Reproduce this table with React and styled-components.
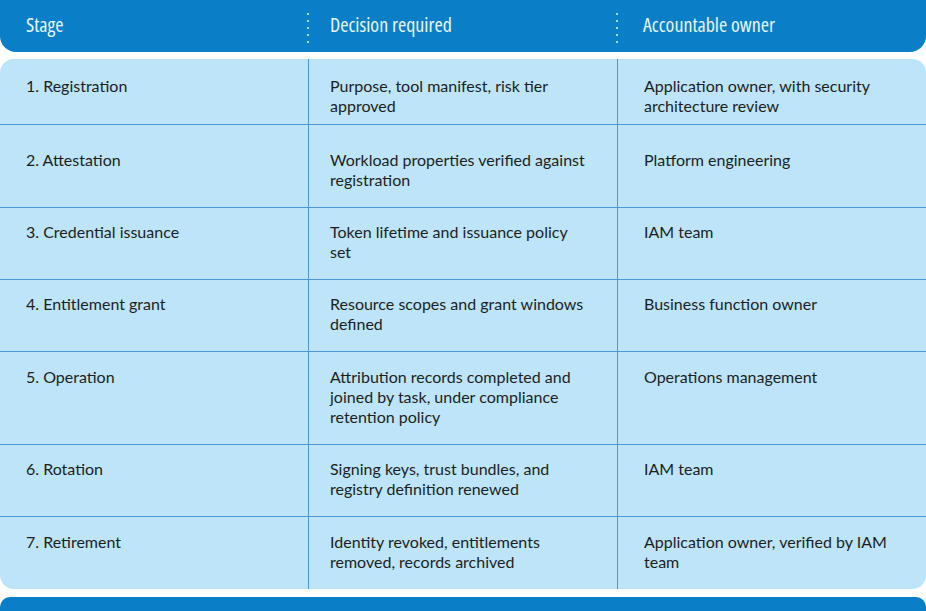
import React from 'react';
import styled, { createGlobalStyle } from 'styled-components';

const GlobalStyle = createGlobalStyle`
  html, body {
    margin: 0;
    padding: 0;
    background: #ffffff;
    overflow: hidden;
  }
`;

const Page = styled.div`
  width: 926px;
  height: 611px;
  display: flex;
  flex-direction: column;
  gap: 7px;
  font-family: Lato, "Noto Sans", sans-serif;
  overflow: hidden;
`;

const HeaderBar = styled.div`
  height: 52px;
  flex-shrink: 0;
  display: grid;
  grid-template-columns: 308px 309px 1fr;
  background: #0a7fc8;
  border-radius: 0 0 16px 16px;
  color: #e8f5fd;
`;

const HeaderCell = styled.div`
  position: relative;
  display: flex;
  align-items: center;
  padding-left: ${p => p.$pad}px;
  padding-bottom: 3px;
  font-family: "Open Sans", Lato, sans-serif;
  font-stretch: 75%;
  font-size: 20px;

  ${p => p.$divider && `
    &::before {
      content: '';
      position: absolute;
      left: -1px;
      top: 13px;
      width: 2px;
      height: 30px;
      background: repeating-linear-gradient(
        to bottom,
        rgba(215, 238, 252, 0.8) 0 2px,
        transparent 2px 7px
      );
    }
  `}
`;

const Body = styled.div`
  flex-shrink: 0;
  background: #bde4f8;
  border-radius: 14px;
  overflow: hidden;
`;

const Row = styled.div`
  display: grid;
  grid-template-columns: 308px 309px 1fr;
  height: ${p => p.$height}px;
  border-top: ${p => (p.$first ? 'none' : '1.5px solid #4a98d6')};
  box-sizing: border-box;
`;

const Cell = styled.div`
  padding: ${p => p.$top}px 30px 0 ${p => p.$pad}px;
  border-left: ${p => (p.$divider ? '1.5px solid #4a98d6' : 'none')};
  font-size: 16px;
  line-height: 20px;
  color: #1b1f24;
`;

const BottomBar = styled.div`
  flex-shrink: 0;
  height: 20px;
  background: #0a7fc8;
  border-radius: 10px 10px 0 0;
  margin-top: 1px;
`;

const rows = [
  { height: 65, top: 17, stage: '1. Registration', decision: 'Purpose, tool manifest, risk tier approved', owner: 'Application owner, with security architecture review' },
  { height: 83, top: 25, stage: '2. Attestation', decision: 'Workload properties verified against registration', owner: 'Platform engineering' },
  { height: 72, top: 14, stage: '3. Credential issuance', decision: 'Token lifetime and issuance policy set', owner: 'IAM team' },
  { height: 72, top: 14, stage: '4. Entitlement grant', decision: 'Resource scopes and grant windows defined', owner: 'Business function owner' },
  { height: 93, top: 15, stage: '5. Operation', decision: 'Attribution records completed and joined by task, under compliance retention policy', owner: 'Operations management' },
  { height: 72, top: 14, stage: '6. Rotation', decision: 'Signing keys, trust bundles, and registry definition renewed', owner: 'IAM team' },
  { height: 73, top: 15, stage: '7. Retirement', decision: 'Identity revoked, entitlements removed, records archived', owner: 'Application owner, verified by IAM team' },
];

const App = () => (
  <>
    <GlobalStyle />
    <Page>
      <HeaderBar>
        <HeaderCell $pad={26}>Stage</HeaderCell>
        <HeaderCell $pad={22} $divider>Decision required</HeaderCell>
        <HeaderCell $pad={26} $divider>Accountable owner</HeaderCell>
      </HeaderBar>
      <Body>
        {rows.map((r, i) => (
          <Row key={r.stage} $height={r.height} $first={i === 0}>
            <Cell $top={r.top} $pad={26}>{r.stage}</Cell>
            <Cell $top={r.top} $pad={21} $divider>{r.decision}</Cell>
            <Cell $top={r.top} $pad={26} $divider>{r.owner}</Cell>
          </Row>
        ))}
      </Body>
      <BottomBar />
    </Page>
  </>
);

export default App;
